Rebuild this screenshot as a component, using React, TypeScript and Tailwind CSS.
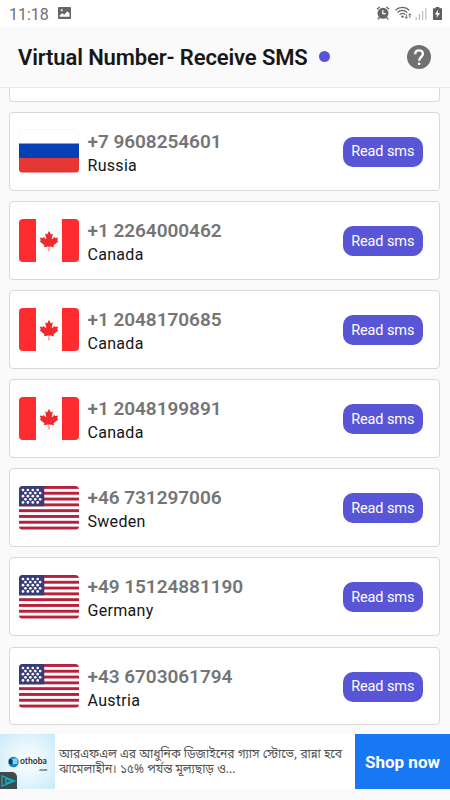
type FlagName = "ru" | "ca" | "us";

type PhoneNumber = {
  number: string;
  country: string;
  flag: FlagName;
};

const numbers: PhoneNumber[] = [
  { number: "+7 9608254601", country: "Russia", flag: "ru" },
  { number: "+1 2264000462", country: "Canada", flag: "ca" },
  { number: "+1 2048170685", country: "Canada", flag: "ca" },
  { number: "+1 2048199891", country: "Canada", flag: "ca" },
  { number: "+46 731297006", country: "Sweden", flag: "us" },
  { number: "+49 15124881190", country: "Germany", flag: "us" },
  { number: "+43 6703061794", country: "Austria", flag: "us" },
];

const stripes = [0, 2, 4, 6, 8, 10, 12, 14];
const starRows = [0, 1, 2, 3, 4];
const starCols = [0, 1, 2, 3];

function Flag({ name }: { name: FlagName }) {
  return (
    <svg
      className="w-[60px] h-[43.5px] rounded-[4px] shrink-0"
      viewBox="0 0 60 43.5"
      preserveAspectRatio="none"
    >
      {name === "ru" && (
        <>
          <rect width="60" height="43.5" fill="#fff" />
          <path d="M0 14.5h60v15H0z" fill="#0540b5" />
          <path d="M0 29h60v14.5H0z" fill="#e53835" />
          <rect
            x="0.25"
            y="0.25"
            width="59.5"
            height="43"
            rx="4"
            fill="none"
            stroke="#000"
            strokeOpacity="0.08"
            strokeWidth="0.5"
          />
        </>
      )}
      {name === "ca" && (
        <>
          <rect width="60" height="43.5" fill="#fdfdfd" />
          <path d="M0 0h17v43.5H0zM43 0h17v43.5H43z" fill="#fe2c2f" />
          <path
            transform="translate(30 22) scale(0.0051)"
            fill="#f02a2d"
            d="m-90 2030 45-863a95 95 0 0 0-111-98l-859 151 116-320a65 65 0 0 0-20-73l-941-762 212-99a65 65 0 0 0 34-79l-186-572 542 115a65 65 0 0 0 73-38l105-247 423 454a65 65 0 0 0 111-57l-204-1052 327 189a65 65 0 0 0 91-27l332-652 332 652a65 65 0 0 0 91 27l327-189-204 1052a65 65 0 0 0 111 57l423-454 105 247a65 65 0 0 0 73 38l542-115-186 572a65 65 0 0 0 34 79l212 99-941 762a65 65 0 0 0-20 73l116 320-859-151a95 95 0 0 0-111 98l45 863z"
          />
        </>
      )}
      {name === "us" && (
        <>
          <rect width="60" height="43.5" fill="#fff" />
          {stripes.map((s) => (
            <rect key={s} y={s * 2.9} width="60" height="2.9" fill="#b9203b" />
          ))}
          <rect width="25.3" height="20.3" fill="#3a3c75" />
          {starRows.map((row) =>
            starCols.map((col) => (
              <circle
                key={`${row}-${col}`}
                cx={4 + col * 4.9 + (row % 2) * 2.45}
                cy={4 + row * 3.1}
                r="1.35"
                fill="#fff"
              />
            ))
          )}
        </>
      )}
    </svg>
  );
}

function StatusBar() {
  return (
    <div className="h-[27px] shrink-0 bg-white flex items-center justify-between pl-[9px] pr-[8.5px]">
      <div className="flex items-center gap-[9px]">
        <span className="text-[16px] leading-none text-[#707070] pt-[2px]">
          11:18
        </span>
        <svg className="w-[13px] h-3 -mt-px" viewBox="0 0 13 12">
          <rect width="13" height="12" rx="1" fill="#666" />
          <path d="M1.7 9.7V8.2l2.6-2 2 1.5 3-3.5 2.2 2.4v3.1z" fill="#fff" />
          <circle cx="3.7" cy="3.3" r="1" fill="#fff" />
        </svg>
      </div>
      <div className="flex items-center -mt-px">
        {/* Alarm */}
        <svg className="w-[14px] h-[14px]" viewBox="0 0 14 14">
          <circle cx="7" cy="7.3" r="5.5" fill="#666" />
          <path
            d="M1 3.3 3.7 1M13 3.3 10.3 1M3.2 11.5l-1.3 1.8M10.8 11.5l1.3 1.8"
            stroke="#666"
            strokeWidth="1.4"
          />
          <path d="M6.8 4v3.7h3" stroke="#fff" strokeWidth="1.2" fill="none" />
        </svg>
        {/* Wifi */}
        <svg className="w-[17px] h-[14px] ml-[5px]" viewBox="0 0 17 14">
          <g fill="none" stroke="#666" strokeWidth="1.3">
            <path d="M.5 4.2C4.2.5 10.6.5 14.3 4.2" />
            <path d="M2.5 6.6C5.4 3.8 9.4 3.8 12.3 6.6" />
            <path d="M4.6 8.8c1.7-1.6 3.9-1.6 5.4-.4" />
          </g>
          <circle cx="7.5" cy="10.6" r="1.2" fill="#666" />
          <path
            d="M11.3 8v4M9.9 10.8l1.4 1.7 1.4-1.7M14.8 12V8M13.4 9.3l1.4-1.7 1.4 1.7"
            stroke="#666"
            strokeWidth="0.9"
            fill="none"
          />
        </svg>
        {/* Signal */}
        <svg className="w-3 h-[13px] ml-[3px]" viewBox="0 0 12 13">
          <path d="M.5 10h1.3v3H.5zM3.8 7h1.3v6H3.8z" fill="#bbb" />
          <path d="M7 4h1.3v9H7zM10.2 1h1.3v12h-1.3z" fill="#c6c6c6" />
        </svg>
        {/* Battery */}
        <svg className="w-[9px] h-[13px] ml-[6px]" viewBox="0 0 9 13">
          <path d="M2.7 0h3.6v1.3H9V13H0V1.3h2.7z" fill="#606060" />
          <path d="M5.3 2.6 1.8 7.5h2.3l-.6 3.4 3.7-4.8H4.8z" fill="#fff" />
        </svg>
      </div>
    </div>
  );
}

function NumberCard({ item }: { item: PhoneNumber }) {
  return (
    <div className="h-[78.9px] shrink-0 bg-white border border-[#d9d9d9] rounded-[4px] flex items-center pl-[9px] pr-4">
      <Flag name={item.flag} />
      <div className="ml-[8.5px] flex-1 pt-[5px]">
        <div className="text-[19px] leading-[24px] tracking-[-0.04px] font-semibold text-[#757575]">
          {item.number}
        </div>
        <div className="text-[16px] leading-[24px] tracking-[0.3px] text-[#161616]">
          {item.country}
        </div>
      </div>
      <button className="w-[80.5px] h-[30px] mt-px pt-[2px] rounded-[10px] bg-[#5856d6] text-white text-[14.5px] tracking-[-0.1px] leading-none">
        Read sms
      </button>
    </div>
  );
}

function AdBanner() {
  return (
    <div className="h-[55px] shrink-0 bg-white flex">
      <div className="w-[54.5px] relative bg-radial from-white to-[#c9eafa] flex items-center pl-2">
        <svg className="w-[11px] h-3 shrink-0" viewBox="0 0 12 12">
          <circle cx="6" cy="6" r="5.7" fill="#1685bd" />
          <path d="M1 2.5 5.5 4v5L1 7.5z" fill="#123e58" />
          <path d="M5 2.3h5.2v5.5L5 8.8z" fill="#7fd4f4" />
        </svg>
        <div className="ml-px w-[27px] pt-[5px] font-bold text-[#333] font-['Lato',sans-serif]">
          <div className="text-[8.5px] leading-[11px]">othoba</div>
          <div className="text-[4px] leading-[5px] text-right">.com</div>
        </div>
        <div className="absolute left-0 bottom-0 w-[17px] h-[17px] bg-[#3f4a4e] rounded-tr-[5px] flex items-center">
          <svg className="w-[15px] h-3 ml-px" viewBox="0 0 15 12">
            <path
              d="M1 .9 13.6 6 1 11.1zM4.8 3.4v5.2L10.6 6z"
              fill="none"
              stroke="#18a9b8"
              strokeWidth="1.3"
            />
          </svg>
        </div>
      </div>
      <div className="flex-1 pl-[4.5px] pt-[14px] text-[12px] leading-[15px] text-[#555] whitespace-nowrap font-['Noto_Sans_Bengali','Noto_Sans',sans-serif]">
        <div className="text-[12.1px]">
          আরএফএল এর আধুনিক ডিজাইনের গ্যাস স্টোভে, রান্না হবে
        </div>
        <div>ঝামেলাহীন। ১৫% পর্যন্ত মূল্যছাড় ও...</div>
      </div>
      <button className="w-[95px] shrink-0 bg-[#1877f2] text-white font-bold text-[17px] pt-[2px]">
        Shop now
      </button>
    </div>
  );
}

export default function App() {
  return (
    <div className="w-[450px] h-[800px] overflow-hidden bg-[#fafafa] flex flex-col font-['Roboto',sans-serif]">
      <StatusBar />
      <header className="h-[61px] shrink-0 border-b border-[#ebebeb] flex items-center pl-[18px] pr-[19px]">
        <h1 className="text-[22px] tracking-[-0.12px] font-semibold text-[#171717] pt-px">
          Virtual Number- Receive SMS
        </h1>
        <span className="w-[11px] h-[11px] rounded-full bg-[#5856d6] ml-[11px] -mt-px" />
        <svg className="w-6 h-6 ml-auto -mt-px" viewBox="0 0 24 24">
          <circle cx="12" cy="12" r="12" fill="#707070" />
          <path
            d="M8.2 9.2C8.2 4 15.9 4.2 15.9 9c0 2.7-3.8 3.2-3.8 6.7"
            fill="none"
            stroke="#fff"
            strokeWidth="2.4"
          />
          <path d="M10.9 17.6h2.4V20h-2.4z" fill="#fff" />
        </svg>
      </header>
      <main className="h-[646px] shrink-0 overflow-hidden pl-[9px] pr-[10px] flex flex-col gap-[10.25px]">
        <div className="h-[13.5px] shrink-0 bg-white border border-t-0 border-[#d9d9d9] rounded-b-[4px]" />
        {numbers.map((item) => (
          <NumberCard key={item.number} item={item} />
        ))}
      </main>
      <AdBanner />
    </div>
  );
}
